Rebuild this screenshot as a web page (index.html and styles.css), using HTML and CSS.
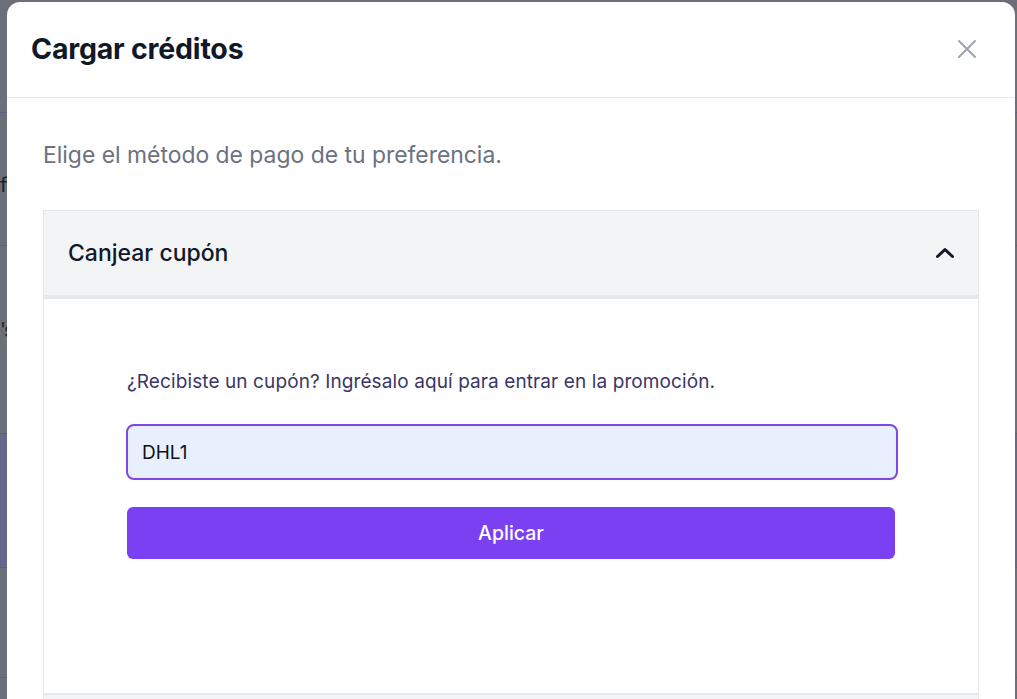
FILE: index.html
```html
<!DOCTYPE html>
<html lang="es">
<head>
<meta charset="utf-8">
<title>Cargar créditos</title>
<link rel="stylesheet" href="styles.css">
</head>
<body>
<div class="backdrop">
  <div class="bg-row r1"></div>
  <div class="bg-row r2"><span class="bg-text">fu</span></div>
  <div class="bg-row r3"><span class="bg-text tight">'s</span></div>
  <div class="bg-row r4"></div>
  <div class="bg-row r5"></div>
  <div class="bg-row r6"></div>
</div>

<div class="modal" role="dialog" aria-labelledby="modal-title">
  <header class="modal-header">
    <h2 id="modal-title" class="modal-title">Cargar créditos</h2>
    <button class="close-btn" aria-label="Cerrar">
      <svg width="20" height="20" viewBox="0 0 20 20" fill="none" stroke="currentColor" stroke-width="2" stroke-linecap="round"><path d="M2 2 L18 18 M18 2 L2 18"/></svg>
    </button>
  </header>
  <div class="modal-body">
    <p class="lead">Elige el método de pago de tu preferencia.</p>
    <div class="accordion">
      <div class="acc-item">
        <div class="acc-head">
          <span class="acc-title">Canjear cupón</span>
          <svg class="chev" width="20" height="12" viewBox="0 0 20 12" fill="none" stroke="currentColor" stroke-width="3" stroke-linecap="round" stroke-linejoin="round"><path d="M2.5 9.5 L10 2.5 L17.5 9.5"/></svg>
        </div>
        <div class="acc-panel">
          <p class="hint">¿Recibiste un cupón? Ingrésalo aquí para entrar en la promoción.</p>
          <input class="coupon" type="text" value="DHL1">
          <button class="apply">Aplicar</button>
        </div>
      </div>
      <div class="acc-item next">
        <div class="acc-head small"></div>
      </div>
    </div>
  </div>
</div>
</body>
</html>
```

FILE: styles.css
```css
* { box-sizing: border-box; }
html, body { margin: 0; padding: 0; }
body {
  width: 1017px;
  height: 699px;
  overflow: hidden;
  background: #6c6f79;
  font-family: Inter, "Noto Sans", "Liberation Sans", sans-serif;
  position: relative;
}

.backdrop { display: flex; flex-direction: column; }
.bg-row { border-top: 1px solid #5e5d7e; position: relative; font-size: 20px; color: #1f1f2a; }
.r1 { height: 112px; border-top: 0; }
.r2 { height: 133px; }
.r3 { height: 188px; }
.r4 { height: 134px; background: #68678a; }
.r5 { height: 110px; }
.r6 { height: 40px; border-top-color: #5f6170; }
.bg-text { position: absolute; left: 0; }
.r2 .bg-text { top: 60px; }
.r3 .bg-text { top: 72px; }
.tight { letter-spacing: -2px; }

.modal {
  position: absolute;
  left: 7px;
  top: 2px;
  width: 1008px;
  height: 760px;
  background: #fff;
  border-radius: 13px 13px 0 0;
}

.modal-header {
  height: 96px;
  border-bottom: 1px solid #e5e7eb;
  display: flex;
  align-items: center;
  justify-content: space-between;
  padding: 0 38px 0 24px;
}
.modal-title {
  margin: 0;
  font-size: 28.5px;
  font-weight: 700;
  color: #111827;
  letter-spacing: -0.2px;
  padding-bottom: 2px;
}
.close-btn {
  background: none;
  border: 0;
  padding: 0;
  color: #9ca3af;
  display: flex;
  margin-bottom: 1px;
}

.modal-body { padding: 43px 36px 0 36px; }
.lead {
  margin: 0 0 41px 0;
  font-size: 22.9px;
  line-height: 28px;
  color: #6b7280;
}

.accordion { display: flex; flex-direction: column; }
.acc-item { border: 1px solid #e5e7eb; border-bottom: 0; }
.acc-head {
  height: 88px;
  background: #f3f4f6;
  border-bottom: 4px solid #e5e7eb;
  display: flex;
  align-items: center;
  justify-content: space-between;
  padding: 0 23px 0 24px;
}
.acc-title { font-size: 23px; font-weight: 500; color: #111827; }
.chev { color: #111827; }

.acc-panel {
  height: 394px;
  padding: 71px 82px 0 82px;
  display: flex;
  flex-direction: column;
}
.hint {
  margin: 0 0 30px 1px;
  font-size: 19px;
  letter-spacing: 0.1px;
  line-height: 24px;
  color: #3b3566;
}
.coupon {
  height: 56px;
  width: 772px;
  border: 2px solid #8045e6;
  border-radius: 8px;
  background: #e8f0fe;
  padding: 0 14px;
  font-family: inherit;
  font-size: 19px;
  color: #111;
  outline: none;
}
.apply {
  margin: 27px 0 0 1px;
  width: 768px;
  height: 52px;
  border: 0;
  border-radius: 6px;
  background: #7b40f2;
  color: #fff;
  font-family: inherit;
  font-size: 19.5px;
  font-weight: 500;
}

.next { border-top: 2px solid #e5e7eb; }
.acc-head.small { height: 40px; border-bottom: 0; }
```
